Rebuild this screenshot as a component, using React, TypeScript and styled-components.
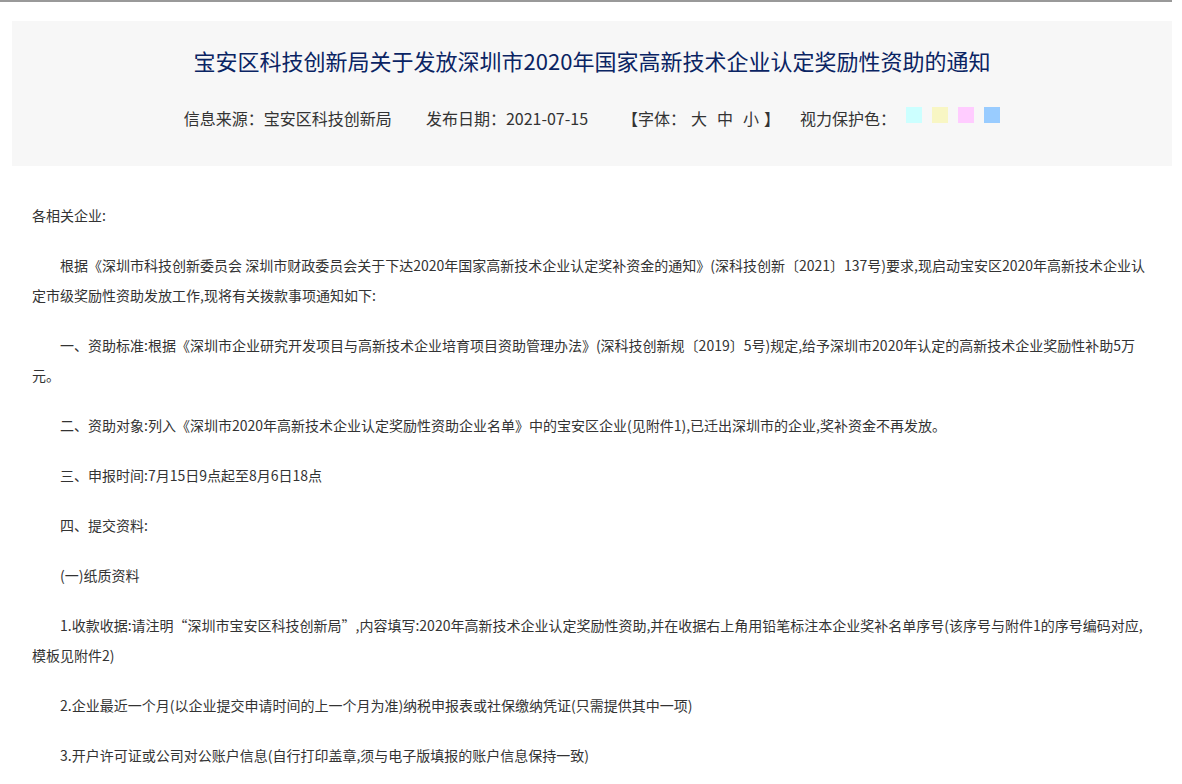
import React from "react";
import styled, { createGlobalStyle } from "styled-components";

const GlobalStyle = createGlobalStyle`
  body {
    margin: 0;
    background: #fff;
    font-family: "Noto Sans CJK SC", "Noto Sans", sans-serif;
    color: #333;
  }
`;

const Page = styled.div`
  width: 1160px;
  margin: 0 0 0 12px;
  border-top: 2px solid #999;
  margin-left: 0;
  padding-left: 12px;
  width: 1160px;
`;

const Header = styled.div`
  margin-top: 19px;
  background: #f7f7f7;
  height: 145px;
  display: flex;
  flex-direction: column;
  align-items: center;
`;

const Title = styled.h1`
  margin: 24px 0 0;
  font-size: 22px;
  font-weight: normal;
  color: #0a2463;
  line-height: 30px;
`;

const Meta = styled.div`
  margin-top: 32px;
  display: flex;
  align-items: center;
  font-size: 16px;
  color: #333;
  line-height: 22px;
`;

const MetaItem = styled.span<{ $gap?: number }>`
  margin-right: ${(p) => p.$gap ?? 34}px;
`;

const SizeLink = styled.span`
  margin: 0 5px;
`;

const Swatch = styled.span<{ $c: string }>`
  display: inline-block;
  width: 16px;
  height: 16px;
  margin-left: 10px;
  background: ${(p) => p.$c};
  position: relative;
  top: -3px;
`;

const Body = styled.div`
  padding: 34px 20px 0 20px;
  font-size: 14px;
`;

const P = styled.p<{ $indent?: boolean }>`
  margin: 0 0 20px;
  line-height: 30px;
  text-indent: ${(p) => (p.$indent ? "2em" : "0")};
`;

const paragraphs = [
  "根据《深圳市科技创新委员会 深圳市财政委员会关于下达2020年国家高新技术企业认定奖补资金的通知》(深科技创新〔2021〕137号)要求,现启动宝安区2020年高新技术企业认定市级奖励性资助发放工作,现将有关拨款事项通知如下:",
  "一、资助标准:根据《深圳市企业研究开发项目与高新技术企业培育项目资助管理办法》(深科技创新规〔2019〕5号)规定,给予深圳市2020年认定的高新技术企业奖励性补助5万元。",
  "二、资助对象:列入《深圳市2020年高新技术企业认定奖励性资助企业名单》中的宝安区企业(见附件1),已迁出深圳市的企业,奖补资金不再发放。",
  "三、申报时间:7月15日9点起至8月6日18点",
  "四、提交资料:",
  "(一)纸质资料",
  "1.收款收据:请注明“深圳市宝安区科技创新局”,内容填写:2020年高新技术企业认定奖励性资助,并在收据右上角用铅笔标注本企业奖补名单序号(该序号与附件1的序号编码对应,模板见附件2)",
  "2.企业最近一个月(以企业提交申请时间的上一个月为准)纳税申报表或社保缴纳凭证(只需提供其中一项)",
  "3.开户许可证或公司对公账户信息(自行打印盖章,须与电子版填报的账户信息保持一致)",
];

export default function App() {
  return (
    <>
      <GlobalStyle />
      <Page>
        <Header>
          <Title>宝安区科技创新局关于发放深圳市2020年国家高新技术企业认定奖励性资助的通知</Title>
          <Meta>
            <MetaItem>信息来源：宝安区科技创新局</MetaItem>
            <MetaItem>发布日期：2021-07-15</MetaItem>
            <MetaItem $gap={20}>
              【字体：<SizeLink>大</SizeLink><SizeLink>中</SizeLink><SizeLink>小</SizeLink>】
            </MetaItem>
            <span>视力保护色：</span>
            <Swatch $c="#ccffff" />
            <Swatch $c="#f8f6c4" />
            <Swatch $c="#ffccff" />
            <Swatch $c="#99ccff" />
          </Meta>
        </Header>
        <Body>
          <P>各相关企业:</P>
          {paragraphs.map((t, i) => (
            <P key={i} $indent>
              {t}
            </P>
          ))}
        </Body>
      </Page>
    </>
  );
}
